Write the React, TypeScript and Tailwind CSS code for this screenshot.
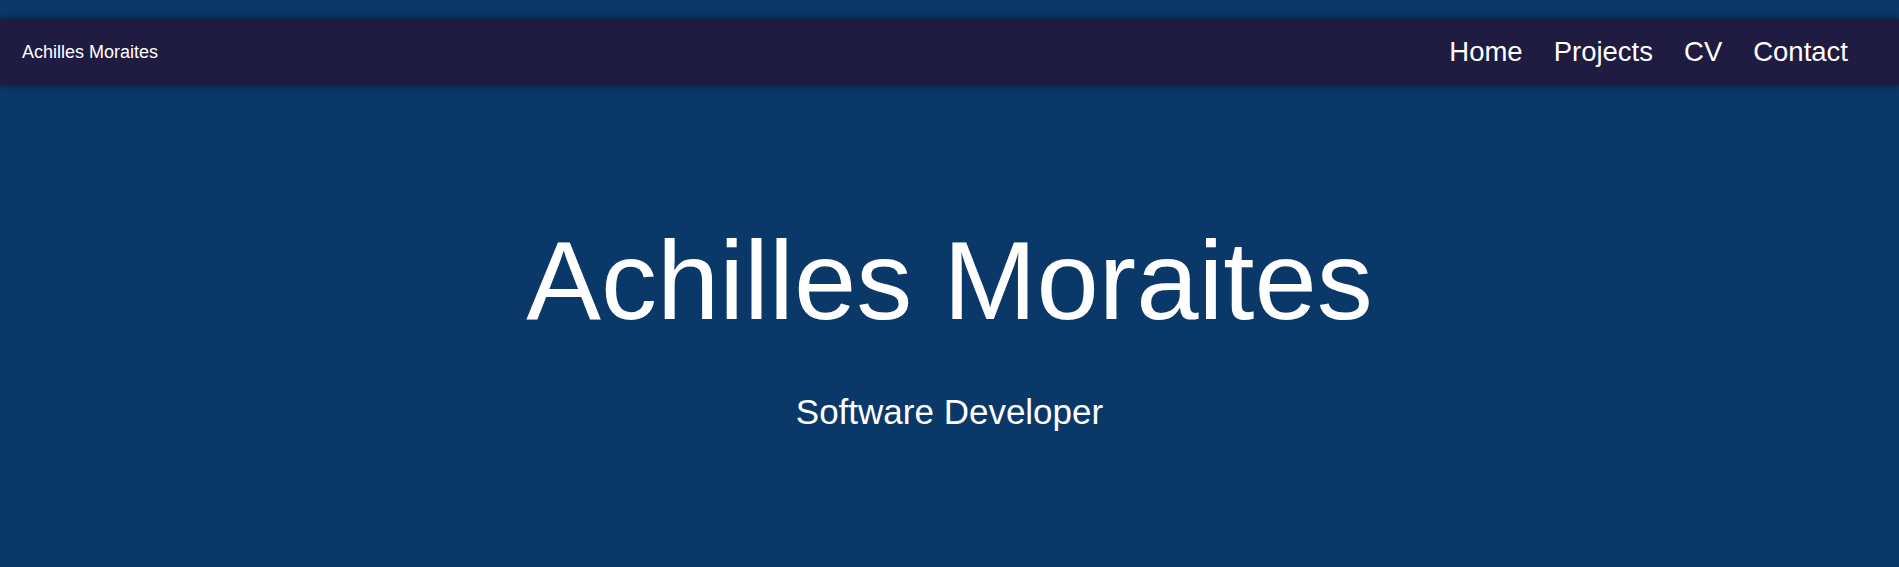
export default function App() {
  const links = ['Home', 'Projects', 'CV', 'Contact'];

  return (
    <div className="min-h-[567px] bg-[#0a3868] pt-[19px] text-white font-['Liberation_Sans',Arial,sans-serif]">
      <nav className="flex h-[66px] items-center justify-between bg-[#201b40] pl-[22px] pr-[51px] shadow-[0_0_6px_rgba(0,0,0,0.6)]">
        <a href="#" className="text-[18px]">
          Achilles Moraites
        </a>
        <ul className="flex gap-[31px]">
          {links.map((link) => (
            <li key={link}>
              <a href="#" className="text-[27.5px]">
                {link}
              </a>
            </li>
          ))}
        </ul>
      </nav>

      <header className="flex flex-col items-center pt-[140px]">
        <h1 className="text-[112px] leading-none">Achilles Moraites</h1>
        <p className="mt-[57px] text-[35px] leading-none">Software Developer</p>
      </header>
    </div>
  );
}
